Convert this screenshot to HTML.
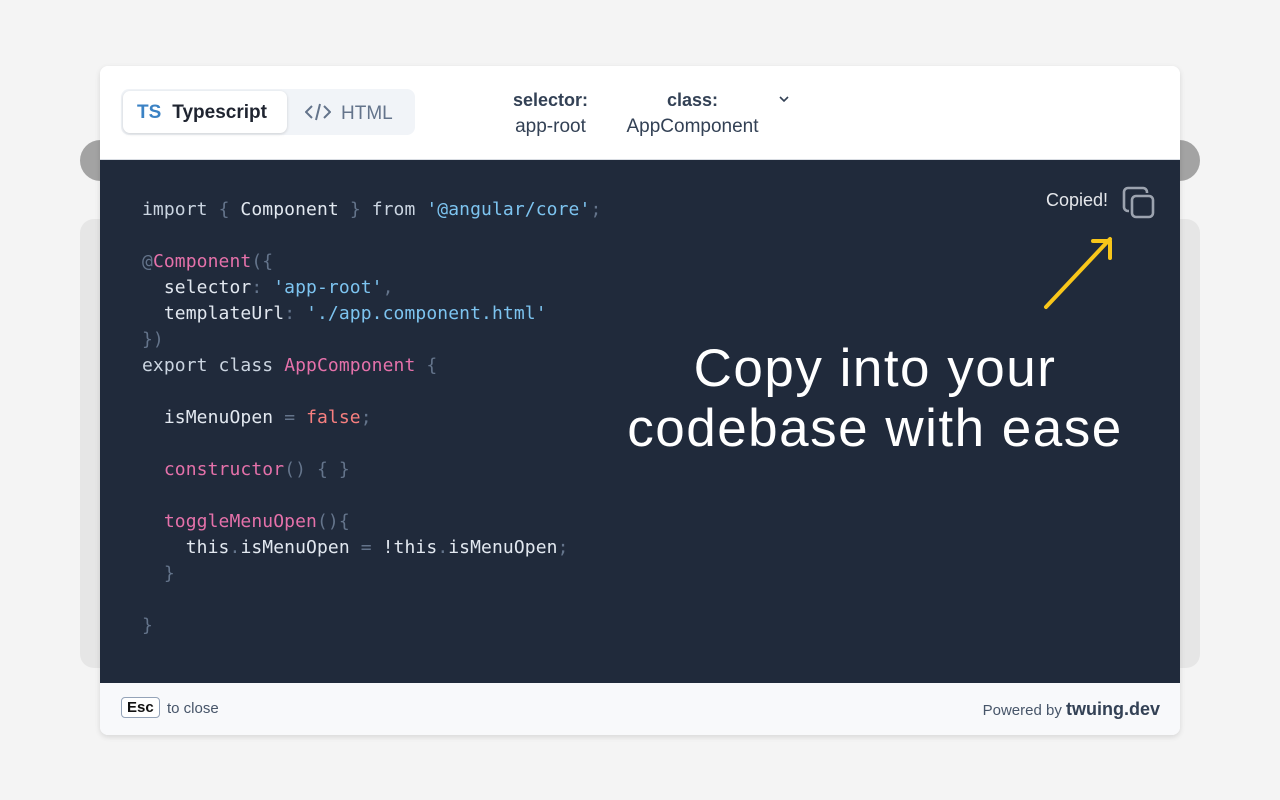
<!DOCTYPE html>
<html><head><meta charset="utf-8"><style>
*{margin:0;padding:0;box-sizing:border-box}
body{width:1280px;height:800px;background:#f4f4f4;position:relative;overflow:hidden;font-family:"Liberation Sans",sans-serif}
.pill{position:absolute;left:80px;top:140px;width:1120px;height:41px;border-radius:21px;background:#a3a3a3}
.panel{position:absolute;left:80px;top:219px;width:1120px;height:449px;border-radius:14px;background:#e6e6e6}
.card{position:absolute;left:100px;top:66px;width:1080px;height:669px;border-radius:8px;overflow:hidden;box-shadow:0 2px 6px rgba(0,0,0,.12);background:#fff}
.head{height:94px;background:#fff;border-bottom:1px solid #d9dde3;position:relative}
.tabs{position:absolute;left:21px;top:23px;width:294px;height:46px;background:#f1f4f8;border-radius:8px}
.tab1{position:absolute;left:2px;top:2px;width:164px;height:42px;background:#fff;border-radius:7px;box-shadow:0 1px 3px rgba(0,0,0,.15);font-size:19px;font-weight:bold;color:#1f2430;line-height:44px;padding-left:14px}
.tab1 b{color:#3b82c4;margin-right:11px}
.tab2{position:absolute;left:184px;top:0;height:46px;line-height:50px;font-size:19px;color:#64748b}
.meta{position:absolute;top:21px;font-size:19px;color:#334155;line-height:26px;text-align:center}
.meta b{font-size:18px}
.code{position:absolute;top:94px;left:0;width:1080px;height:523px;background:#202a3b}
pre{position:absolute;left:42px;top:37px;font-family:"DejaVu Sans Mono",monospace;font-size:18px;line-height:26px;color:#e2e8f0;letter-spacing:.1px}
.k{color:#cbd5e1}.p{color:#64748b}.s{color:#7dc4f0}.m{color:#e571aa}.r{color:#f77f7f}
.big{position:absolute;left:425px;width:700px;top:179px;text-align:center;color:#fff;font-size:53px;line-height:60px;letter-spacing:1.5px}
.copied{position:absolute;right:72px;top:30px;color:#e5e7eb;font-size:18px}
.foot{position:absolute;top:617px;left:0;width:1080px;height:52px;background:#f8f9fb;font-size:15px;color:#475569}
.esc{position:absolute;left:21px;top:14px;border:1px solid #94a3b8;border-radius:4px;padding:1px 5px;font-weight:bold;color:#111;font-size:15px;background:#fff}
</style></head><body>
<div class="pill"></div><div class="panel"></div>
<div class="card">
<div class="head">
<div class="tabs"><div class="tab1"><b>TS</b>Typescript</div><div class="tab2"><svg width="26" height="20" viewBox="0 0 26 20" style="vertical-align:-3px;margin-right:10px" fill="none" stroke="#64748b" stroke-width="2"><path d="M7 4 1 10l6 6M19 4l6 6-6 6M15 2 11 18"/></svg>HTML</div></div>
<div class="meta" style="left:406px;width:89px"><b>selector:</b><br>app-root</div>
<div class="meta" style="left:520px;width:145px"><b>class:</b><br>AppComponent</div>
<svg style="position:absolute;left:679px;top:29px" width="10" height="8" viewBox="0 0 10 8" fill="none" stroke="#334155" stroke-width="1.6"><path d="M1 2l4 4 4-4"/></svg>
</div>
<div class="code">
<pre><span class="k">import</span> <span class="p">{</span> Component <span class="p">}</span> <span class="k">from</span> <span class="s">'@angular/core'</span><span class="p">;</span>

<span class="p">@</span><span class="m">Component</span><span class="p">({</span>
  selector<span class="p">:</span> <span class="s">'app-root'</span><span class="p">,</span>
  templateUrl<span class="p">:</span> <span class="s">'./app.component.html'</span>
<span class="p">})</span>
<span class="k">export class</span> <span class="m">AppComponent</span> <span class="p">{</span>

  isMenuOpen <span class="p">=</span> <span class="r">false</span><span class="p">;</span>

  <span class="m">constructor</span><span class="p">() { }</span>

  <span class="m">toggleMenuOpen</span><span class="p">(){</span>
    this<span class="p">.</span>isMenuOpen <span class="p">=</span> !this<span class="p">.</span>isMenuOpen<span class="p">;</span>
  <span class="p">}</span>

<span class="p">}</span></pre>
<div class="copied">Copied!</div>
<svg style="position:absolute;left:1022px;top:26px" width="34" height="34" viewBox="0 0 34 34" fill="none" stroke="#9ca3af" stroke-width="2.6"><rect x="10" y="10" width="21" height="21" rx="4"/><path d="M7 25H6a4 4 0 0 1-4-4V6a4 4 0 0 1 4-4h15a4 4 0 0 1 4 4v1"/></svg>
<svg style="position:absolute;left:940px;top:70px" width="80" height="80" viewBox="0 0 80 80" fill="none" stroke="#f8c61a" stroke-width="4" stroke-linecap="round" stroke-linejoin="round"><path d="M6 77 70 9M53 11h17v17"/></svg>
<div class="big">Copy into your<br>codebase with ease</div>
</div>
<div class="foot"><span class="esc">Esc</span><span style="position:absolute;left:67px;top:17px">to close</span><span style="position:absolute;right:20px;top:16px">Powered by <b style="color:#334155;font-size:18px">twuing.dev</b></span></div>
</div>
</body></html>
